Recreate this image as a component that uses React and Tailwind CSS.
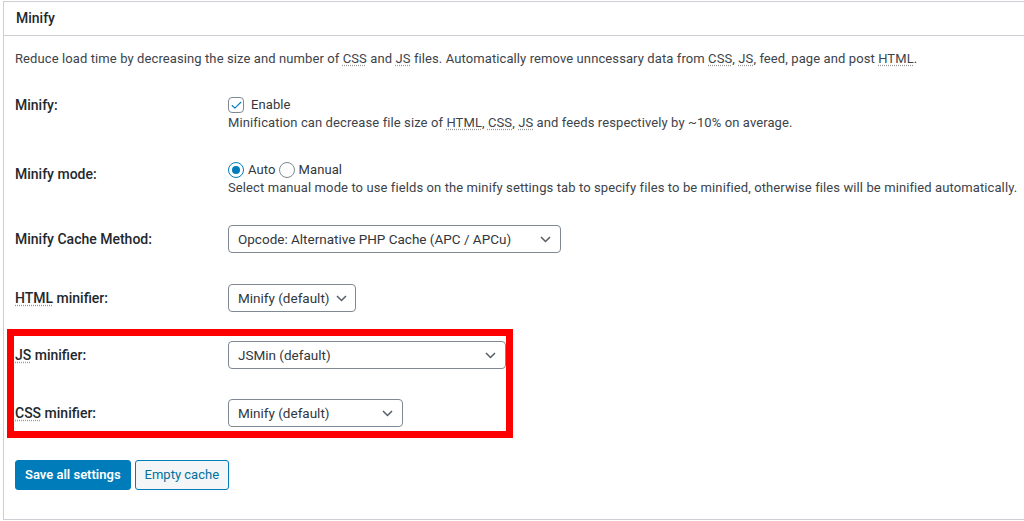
import { Check } from "lucide-react";

const font = { fontFamily: "Roboto, 'Noto Sans', sans-serif" };

function Abbr({ children }) {
  return (
    <abbr className="underline decoration-dotted decoration-[#999] underline-offset-2">
      {children}
    </abbr>
  );
}

function Chevron() {
  return (
    <svg width="11" height="7" viewBox="0 0 11 7" className="shrink-0">
      <path d="M1 1l4.5 4.5L10 1" fill="none" stroke="#555d66" strokeWidth="1.5" />
    </svg>
  );
}

function Select({ value, width }) {
  return (
    <div
      className={`flex items-center justify-between gap-[6px] h-[28px] border border-[#7e8993] rounded-[4px] bg-white pl-[9px] pr-[9px] text-[13.5px] tracking-normal text-[#32373c] ${width}`}
    >
      <span className="whitespace-nowrap">{value}</span>
      <Chevron />
    </div>
  );
}

function Row({ label, children, className }) {
  return (
    <div className={`flex items-center ${className}`}>
      <div className="w-[213px] shrink-0 text-[14px] font-medium text-[#23282d]">
        {label}
      </div>
      {children}
    </div>
  );
}

export default function App() {
  return (
    <div className="w-[1024px] h-[521px] overflow-hidden bg-white" style={font}>
      <div className="relative ml-[3px] mt-[1px] w-[1040px] h-[519px] border border-[#ccd0d4] bg-white">
        {/* Header */}
        <div className="h-[34px] border-b border-[#ccd0d4] flex items-center pl-[12px]">
          <h3 className="text-[14px] font-medium text-[#23282d]">Minify</h3>
        </div>

        <div className="pl-[11px] text-[13px] tracking-[0.1px] text-[#3c434a]">
          <p className="mt-[13px] leading-[20px]">
            Reduce load time by decreasing the size and number of <Abbr>CSS</Abbr> and{" "}
            <Abbr>JS</Abbr> files. Automatically remove unncessary data from <Abbr>CSS</Abbr>,{" "}
            <Abbr>JS</Abbr>, feed, page and post <Abbr>HTML</Abbr>.
          </p>

          {/* Minify */}
          <div className="flex mt-[27px]">
            <div className="w-[213px] shrink-0 leading-[18px] text-[14px] tracking-normal font-medium text-[#23282d]">
              Minify:
            </div>
            <div>
              <div className="flex items-center h-[18px] gap-[7px]">
                <span className="w-[16px] h-[16px] border border-[#7e8993] rounded-[4px] flex items-center justify-center bg-white">
                  <Check size={13} strokeWidth={2} className="text-[#007cba]" />
                </span>
                <span className="text-[#32373c]">Enable</span>
              </div>
              <p className="leading-[18px]">
                Minification can decrease file size of <Abbr>HTML</Abbr>, <Abbr>CSS</Abbr>,{" "}
                <Abbr>JS</Abbr> and feeds respectively by ~10% on average.
              </p>
            </div>
          </div>

          {/* Minify mode */}
          <div className="flex mt-[29px]">
            <div className="w-[213px] shrink-0 pt-[4px] leading-[18px] text-[14px] tracking-normal font-medium text-[#23282d]">
              Minify mode:
            </div>
            <div>
              <div className="flex items-center h-[18px] text-[#32373c]">
                <span className="w-[16px] h-[16px] rounded-full border border-[#007cba] flex items-center justify-center bg-white">
                  <span className="w-[8px] h-[8px] rounded-full bg-[#007cba]" />
                </span>
                <span className="ml-[4px]">Auto</span>
                <span className="ml-[3px] w-[16px] h-[16px] rounded-full border border-[#7e8993] bg-white" />
                <span className="ml-[4px]">Manual</span>
              </div>
              <p className="leading-[18px]">
                Select manual mode to use fields on the minify settings tab to specify files to be
                minified, otherwise files will be minified automatically.
              </p>
            </div>
          </div>

          <Row label="Minify Cache Method:" className="mt-[28px] tracking-normal">
            <Select value="Opcode: Alternative PHP Cache (APC / APCu)" width="w-[333px]" />
          </Row>

          <Row label={<><Abbr>HTML</Abbr> minifier:</>} className="mt-[31px] tracking-normal">
            <Select value="Minify (default)" width="w-[128px]" />
          </Row>

          <Row label={<><Abbr>JS</Abbr> minifier:</>} className="mt-[29px] tracking-normal">
            <Select value="JSMin (default)" width="w-[278px]" />
          </Row>

          <Row label={<><Abbr>CSS</Abbr> minifier:</>} className="mt-[30px] tracking-normal">
            <Select value="Minify (default)" width="w-[175px]" />
          </Row>

          <div className="flex gap-[4px] mt-[33px] tracking-normal">
            <button className="h-[30px] px-[9px] rounded-[3px] bg-[#007cba] border border-[#007cba] text-white text-[13px] font-semibold">
              Save all settings
            </button>
            <button className="h-[30px] px-[9px] rounded-[3px] bg-[#f3f5f6] border border-[#007cba] text-[#0071a1] text-[13px]">
              Empty cache
            </button>
          </div>
        </div>

        {/* Annotation highlight */}
        <div className="absolute left-[3px] top-[327px] w-[506px] h-[109px] border-[7px] border-[#ff0000] pointer-events-none" />
      </div>
    </div>
  );
}
